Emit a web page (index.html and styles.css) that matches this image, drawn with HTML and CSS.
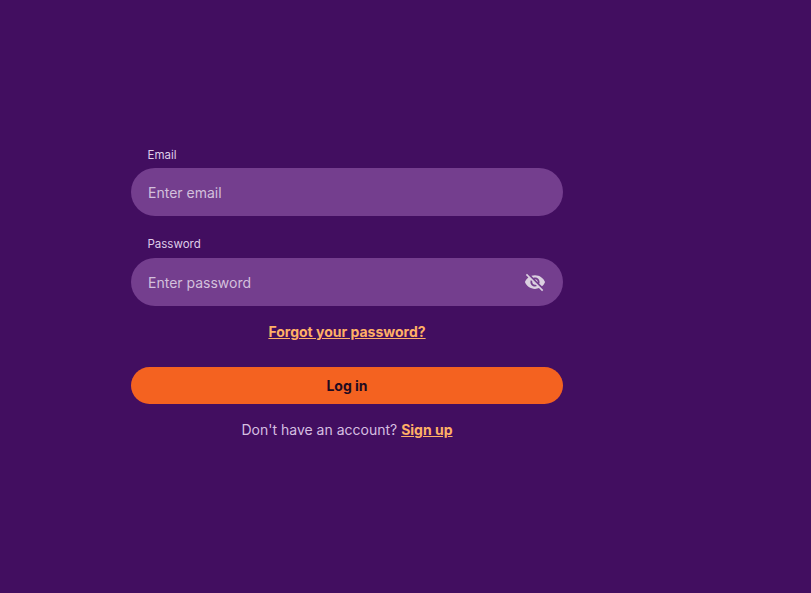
FILE: index.html
```html
<!DOCTYPE html>
<html lang="en">
<head>
    <meta charset="UTF-8">
    <meta name="viewport" content="width=device-width, initial-scale=1.0">
    <title>Log in</title>
    <link rel="stylesheet" href="styles.css">
</head>
<body>

    <form class="login-form">
        <div class="form-group">
            <label for="email">Email</label>
            <div class="field">
                <input type="text" id="email" placeholder="Enter email">
            </div>
        </div>

        <div class="form-group">
            <label for="password">Password</label>
            <div class="field">
                <input type="password" id="password" placeholder="Enter password">
                <svg class="eye-icon" viewBox="0 0 24 24" width="22" height="22" aria-hidden="true">
                    <path d="M12 7c2.76 0 5 2.24 5 5 0 .65-.13 1.26-.36 1.83l2.92 2.92c1.51-1.26 2.7-2.89 3.43-4.75-1.73-4.39-6-7.5-11-7.5-1.4 0-2.74.25-3.98.7l2.16 2.16C10.74 7.13 11.35 7 12 7zM2 4.27l2.28 2.28.46.46C3.08 8.3 1.78 10.02 1 12c1.73 4.39 6 7.5 11 7.5 1.55 0 3.03-.3 4.38-.84l.42.42L19.73 22 21 20.73 3.27 3 2 4.27zM7.53 9.8l1.55 1.55c-.05.21-.08.43-.08.65 0 1.66 1.34 3 3 3 .22 0 .44-.03.65-.08l1.55 1.55c-.67.33-1.41.53-2.2.53-2.76 0-5-2.24-5-5 0-.79.2-1.53.53-2.2zm4.31-.78l3.15 3.15.02-.16c0-1.66-1.34-3-3-3l-.17.01z"/>
                </svg>
            </div>
        </div>

        <a class="forgot-link" href="#">Forgot your password?</a>

        <button type="button" class="login-btn">Log in</button>

        <p class="signup-text">Don't have an account? <a href="#">Sign up</a></p>
    </form>

</body>
</html>
```

FILE: styles.css
```css
* {
    box-sizing: border-box;
}
body {
    margin: 0;
    min-height: 100vh;
    background-color: #420e60;
    font-family: Inter, "Noto Sans", sans-serif;
    color: #d6bfe0;
    padding: 148px 0 0 131px;
}
.login-form {
    width: 432px;
    display: flex;
    flex-direction: column;
}
.form-group {
    margin-bottom: 21px;
}
.form-group + .form-group {
    margin-bottom: 17px;
}
.form-group + .form-group label {
    margin-bottom: 7px;
}
label {
    display: block;
    font-size: 11.5px;
    line-height: 14px;
    padding-left: 16.5px;
    margin-bottom: 6px;
    color: #dfcde8;
}
.field {
    position: relative;
}
input {
    display: block;
    width: 100%;
    height: 48px;
    padding: 0 60px 0 17px;
    border: none;
    border-radius: 24px;
    background-color: #743e8e;
    font-family: inherit;
    font-size: 14px;
    color: #e6d3ee;
}
input::placeholder {
    color: #d3c0dc;
    opacity: 1;
}
.eye-icon {
    position: absolute;
    right: 17px;
    top: 13px;
    fill: #dbd0e0;
}
.forgot-link,
.signup-text a {
    color: #ffb066;
    font-weight: 700;
}
.forgot-link {
    align-self: center;
    font-size: 14px;
    line-height: 18px;
}
.login-btn {
    height: 37px;
    margin-top: 26px;
    border: none;
    border-radius: 19px;
    background-color: #f46220;
    color: #1f0a20;
    font-family: inherit;
    font-size: 14px;
    font-weight: 700;
    cursor: pointer;
}
.signup-text {
    margin: 17px 0 0;
    text-align: center;
    font-size: 14px;
    line-height: 18px;
}
```
